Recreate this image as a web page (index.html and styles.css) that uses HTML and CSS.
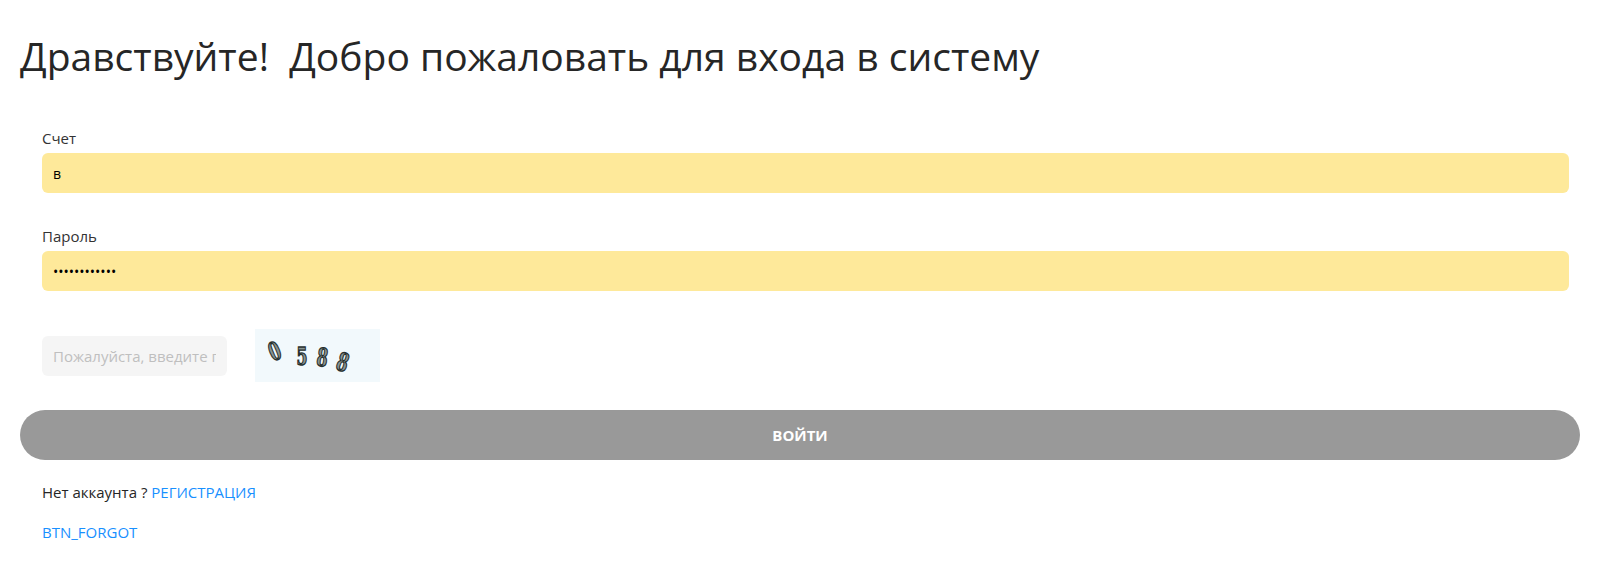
FILE: index.html
```html
<!DOCTYPE html>
<html lang="ru">
<head>
  <meta charset="UTF-8" />
  <title>Вход</title>
  <meta name="viewport" content="width=device-width, initial-scale=1.0" />
  <link rel="stylesheet" href="styles.css">
</head>
<body>
  <div class="page">
    <h1>Дравствуйте!&nbsp; Добро пожаловать для входа в систему</h1>
    <form class="login" id="loginForm">
      <div class="fields">
        <div class="field">
          <label for="account">Счет</label>
          <input id="account" type="text" value="в" />
        </div>
        <div class="field">
          <label for="password">Пароль</label>
          <input id="password" type="password" value="************" />
        </div>
        <div class="captcha-row">
          <input class="captcha-input" type="text" placeholder="Пожалуйста, введите проверочный код" />
          <svg class="captcha" width="125" height="53" viewBox="0 0 125 53">
            <rect width="125" height="53" fill="#f2f9fc" />
            <g font-family="'DejaVu Serif Condensed', serif" font-weight="bold" font-size="25" fill="#8a9593" stroke="#27302e" stroke-width="1.4" text-anchor="middle">
              <g transform="translate(19.5 22) rotate(-22) scale(0.72 1)"><text x="0" y="9">0</text></g>
              <g transform="translate(47 27.5) scale(0.7 0.95)"><text x="0" y="9">5</text></g>
              <g transform="translate(67.5 28) rotate(8) scale(0.7 1)"><text x="0" y="9">8</text></g>
              <g transform="translate(88 33) rotate(18) scale(0.72 1)"><text x="0" y="9">8</text></g>
            </g>
          </svg>
        </div>
      </div>
      <button type="submit" class="submit">ВОЙТИ</button>
      <div class="links">
        <p>Нет аккаунта ? <a href="#">РЕГИСТРАЦИЯ</a></p>
        <p><a href="#">BTN_FORGOT</a></p>
      </div>
    </form>
  </div>
</body>
</html>
```

FILE: styles.css
```css
:root {
  --text: #262626;
  --label: #333333;
  --field: #fee99a;
  --muted: #f5f5f5;
  --placeholder: #bfbfbf;
  --button: #999999;
  --link: #1890ff;
}

body {
  margin: 0;
  font-family: 'Open Sans', 'Noto Sans', sans-serif;
  color: var(--text);
  background: #ffffff;
}

.page {
  padding: 30px 20px 0 20px;
}

h1 {
  margin: 0;
  font-size: 39px;
  font-weight: 400;
  line-height: 52px;
  color: var(--text);
}

.login {
  margin-top: 45px;
}

.fields {
  padding: 0 11px 0 22px;
}

.field {
  margin-bottom: 32px;
}

.field label {
  display: block;
  font-size: 15px;
  line-height: 22px;
  color: var(--label);
  margin-bottom: 4px;
}

.field input,
.captcha-input {
  display: block;
  box-sizing: border-box;
  width: 100%;
  height: 40px;
  padding: 0 11px;
  border: none;
  border-radius: 6px;
  background: var(--field);
  font-family: inherit;
  font-size: 14px;
  color: #000;
  outline: none;
}

.captcha-row {
  display: flex;
  align-items: center;
  gap: 28px;
  margin-top: 38px;
}

.captcha-input {
  width: 185px;
  background: var(--muted);
  font-size: 15px;
}

.captcha-input::placeholder {
  color: var(--placeholder);
}

.captcha {
  display: block;
}

.submit {
  display: block;
  width: 100%;
  height: 50px;
  margin-top: 28px;
  border: none;
  border-radius: 25px;
  background: var(--button);
  color: #ffffff;
  font-family: inherit;
  font-size: 15px;
  font-weight: 700;
  cursor: pointer;
}

.links {
  padding-left: 22px;
  margin-top: 21px;
}

.links p {
  margin: 0 0 18px 0;
  font-size: 15px;
  line-height: 22px;
  color: var(--text);
}

.links a {
  color: var(--link);
  text-decoration: none;
}
```
